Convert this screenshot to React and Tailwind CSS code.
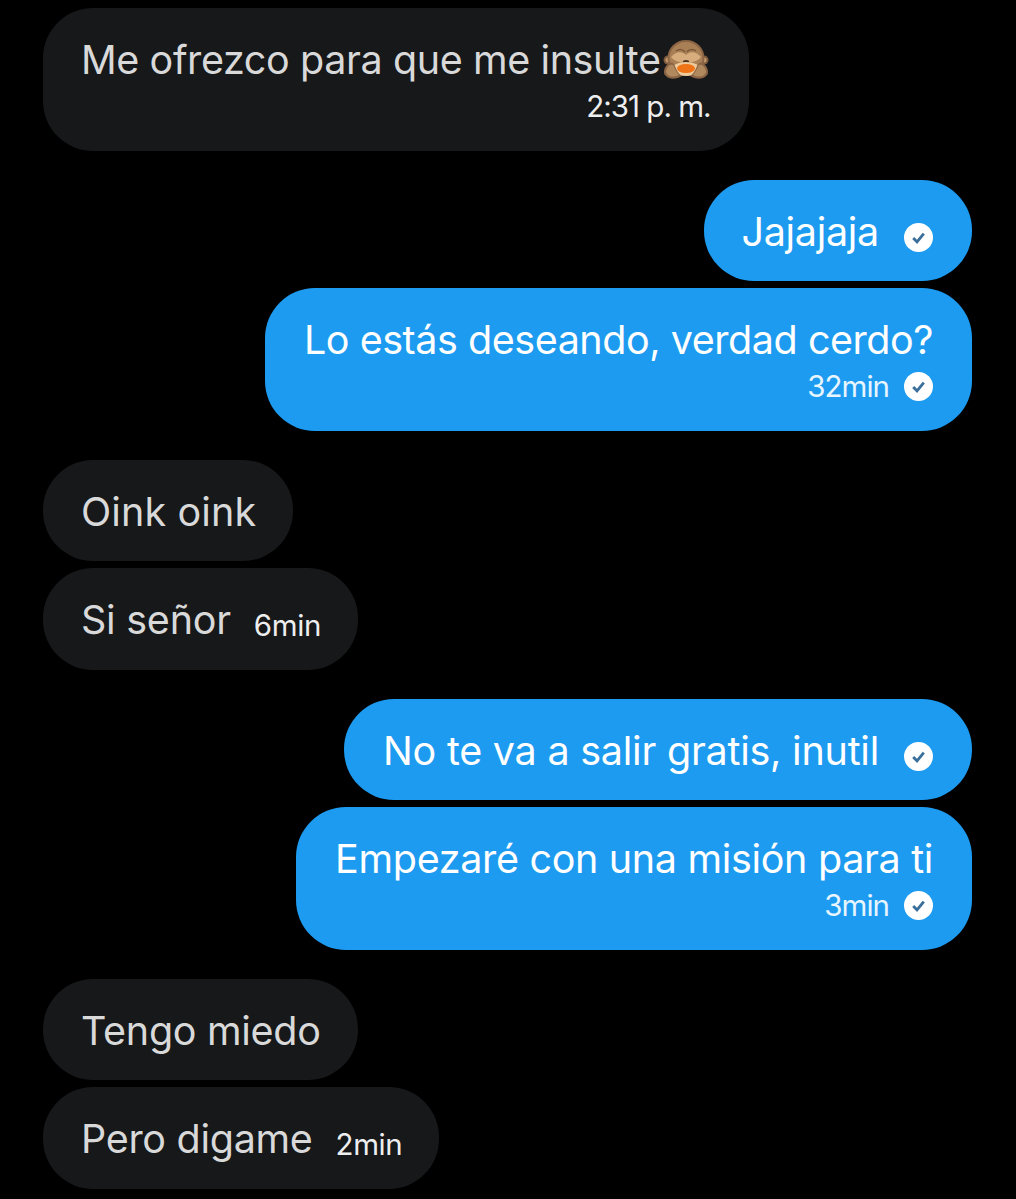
import React from 'react';

function CheckBadge({ className = '' }) {
  return (
    <svg viewBox="0 0 29 29" className={`h-[29px] w-[29px] shrink-0 ${className}`}>
      <circle cx="14.5" cy="14.5" r="14.5" fill="#ffffff" />
      <path d="M9.2 15l3.8 3.8 6.8-8.2" fill="none" stroke="#3a6f9c" strokeWidth="2.8" />
    </svg>
  );
}

function MonkeyEmoji() {
  return (
    <svg viewBox="0 0 46 40" className="mx-[2px] h-[40px] w-[46px] shrink-0">
      <circle cx="5" cy="20" r="4.5" fill="#7d5c3e" />
      <circle cx="41" cy="20" r="4.5" fill="#7d5c3e" />
      <circle cx="5" cy="20" r="2.5" fill="#c49a6c" />
      <circle cx="41" cy="20" r="2.5" fill="#c49a6c" />
      <ellipse cx="23" cy="18" rx="18.5" ry="18" fill="#8a6444" />
      <ellipse cx="23" cy="18" rx="16.5" ry="16" fill="#a98055" />
      <path d="M8 17c5-6 11-6 15-2 4-4 10-4 15 2-4 5-10 6-15 4-5 2-11 1-15-4z" fill="#d8ad7e" />
      <path d="M13 11c3-2 7-2 9 1M33 11c-3-2-7-2-9 1" fill="none" stroke="#7a5638" strokeWidth="1.5" />
      <ellipse cx="23" cy="21.5" rx="3" ry="1.5" fill="#4a2f1c" />
      <ellipse cx="23" cy="29" rx="14" ry="7" fill="#edcb9c" />
      <ellipse cx="23" cy="28.5" rx="9" ry="4.5" fill="#ee7417" />
      <path d="M1 31c1-6 6-10 9-8 3 3 3 9 9 13-4 3-13 4-16 0-2-1-2-3-2-5z" fill="#8a6444" />
      <path d="M45 31c-1-6-6-10-9-8-3 3-3 9-9 13 4 3 13 4 16 0 2-1 2-3 2-5z" fill="#8a6444" />
      <path d="M3 31c1-4 4-7 7-6 2 3 3 7 6 10-4 2-9 2-11 0-1-1-2-2-2-4z" fill="#b08a5e" />
      <path d="M43 31c-1-4-4-7-7-6-2 3-3 7-6 10 4 2 9 2 11 0 1-1 2-2 2-4z" fill="#b08a5e" />
    </svg>
  );
}

function Bubble({ mine, text, time, check, emoji, stacked, tracking = 'tracking-[-0.4px]', pad }) {
  const color = mine ? 'bg-[#1d9bf0] text-white' : 'bg-[#16181a] text-[#d9d9d9]';
  const timeColor = mine ? 'text-[#e6f5ff]' : 'text-[#eeeeee]';
  const left = pad || (mine ? 'pl-[39px]' : 'pl-[38px]');
  const textEl = <span className={`text-[39.5px] leading-[46px] ${tracking}`}>{text}</span>;

  if (stacked) {
    return (
      <div className={`flex ${mine ? 'justify-end' : 'justify-start'}`}>
        <div className={`h-[143px] rounded-[50px] pt-[29px] ${left} ${mine ? 'pr-[39px]' : 'pr-[38px]'} ${color}`}>
          <div className="flex items-center">
            {textEl}
            {emoji && <MonkeyEmoji />}
          </div>
          <div className="flex items-center justify-end gap-[15px] pt-[5px]">
            <span className={`text-[29.5px] leading-[36px] tracking-[-1px] ${timeColor}`}>{time}</span>
            {check && <CheckBadge />}
          </div>
        </div>
      </div>
    );
  }

  return (
    <div className={`flex ${mine ? 'justify-end' : 'justify-start'}`}>
      <div className={`flex items-start rounded-[50px] pt-[29px] ${left} ${time ? 'h-[102px]' : 'h-[101px]'} ${mine ? 'pr-[39px]' : 'pr-[37px]'} ${color}`}>
        {textEl}
        {time && (
          <span className={`ml-[23px] mt-[10px] text-[29.5px] leading-[36px] tracking-[-0.4px] ${timeColor}`}>{time}</span>
        )}
        {check && <CheckBadge className="ml-[25px] mt-[14px]" />}
      </div>
    </div>
  );
}

const groups = [
  [{ text: 'Me ofrezco para que me insulte', emoji: true, time: '2:31 p. m.', stacked: true }],
  [
    { mine: true, text: 'Jajajaja', check: true, pad: 'pl-[37px]', tracking: 'tracking-[-0.3px]' },
    { mine: true, text: 'Lo estás deseando, verdad cerdo?', time: '32min', check: true, stacked: true, tracking: 'tracking-[-0.46px]' },
  ],
  [
    { text: 'Oink oink', tracking: 'tracking-[0.12px]' },
    { text: 'Si señor', time: '6min', tracking: 'tracking-[-0.25px]' },
  ],
  [
    { mine: true, text: 'No te va a salir gratis, inutil', check: true, tracking: 'tracking-[-0.24px]' },
    { mine: true, text: 'Empezaré con una misión para ti', time: '3min', check: true, stacked: true, tracking: 'tracking-[-0.33px]' },
  ],
  [
    { text: 'Tengo miedo', tracking: 'tracking-[-0.3px]' },
    { text: 'Pero digame', time: '2min', tracking: 'tracking-[-0.3px]' },
  ],
];

export default function App() {
  return (
    <div className="flex min-h-screen flex-col gap-[29px] bg-black pb-[11px] pl-[43px] pr-[44px] pt-[8px] font-['Inter',sans-serif]">
      {groups.map((group, i) => (
        <div key={i} className="flex flex-col gap-[7px]">
          {group.map((msg, j) => (
            <Bubble key={j} {...msg} />
          ))}
        </div>
      ))}
    </div>
  );
}
